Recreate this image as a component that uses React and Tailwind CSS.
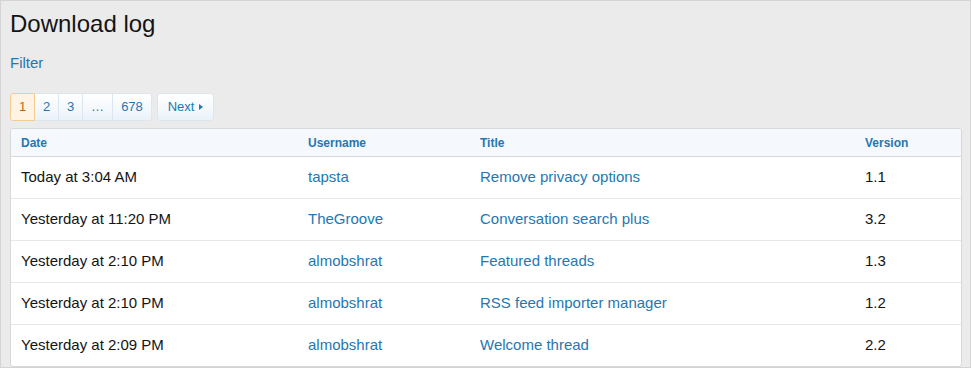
export default function App() {
  const rows = [
    ["Today at 3:04 AM", "tapsta", "Remove privacy options", "1.1"],
    ["Yesterday at 11:20 PM", "TheGroove", "Conversation search plus", "3.2"],
    ["Yesterday at 2:10 PM", "almobshrat", "Featured threads", "1.3"],
    ["Yesterday at 2:10 PM", "almobshrat", "RSS feed importer manager", "1.2"],
    ["Yesterday at 2:09 PM", "almobshrat", "Welcome thread", "2.2"],
  ];
  const pageBtn =
    "h-[28px] flex items-center justify-center border border-[#dce6ef] bg-gradient-to-b from-white to-[#eaf3fa] text-[#2577b1]";
  return (
    <div
      className="w-[971px] h-[368px] overflow-hidden bg-[#ebebeb] border border-[#d4d4d4] text-[#141414]"
      style={{ fontFamily: '"Liberation Sans", Arial, sans-serif' }}
    >
      <div className="pl-[9px] pr-[8px]">
        <h1 className="text-[24px] leading-[30px] pt-[8px] m-0 font-normal">Download log</h1>
        <div className="mt-[14px] text-[15px] leading-[20px] text-[#2577b1]">Filter</div>
        <div className="mt-[20px] flex text-[13px]">
          <div className="flex rounded-[3px] overflow-hidden">
            <span className="h-[28px] w-[25px] flex items-center justify-center border border-[#f4cc92] bg-[#fff4e3] text-[#b06d12] rounded-l-[3px]">1</span>
            <span className={pageBtn + " w-[24px] border-l-0"}>2</span>
            <span className={pageBtn + " w-[24px] border-l-0"}>3</span>
            <span className={pageBtn + " w-[30px] border-l-0"}>…</span>
            <span className={pageBtn + " w-[39px] border-l-0 rounded-r-[3px]"}>678</span>
          </div>
          <span className={pageBtn + " ml-[5px] w-[57px] rounded-[3px] gap-[5px]"}>
            Next
            <svg width="4" height="6" viewBox="0 0 4 6"><path d="M0 0 L4 3 L0 6 Z" fill="#2577b1" /></svg>
          </span>
        </div>
        <div className="mt-[7px] bg-white border border-[#d8d8d8] rounded-[3px] overflow-hidden">
          <div className="flex h-[28px] items-center bg-[#f5f9fd] border-b border-[#d8d8d8] text-[12px] font-bold text-[#2577b1]">
            <div className="w-[287px] pl-[10px]">Date</div>
            <div className="w-[172px] pl-[10px]">Username</div>
            <div className="w-[385px] pl-[10px]">Title</div>
            <div className="flex-1 pl-[10px]">Version</div>
          </div>
          {rows.map((r, i) => (
            <div
              key={i}
              className={
                "flex items-center text-[15px] " +
                (i < rows.length - 1 ? "h-[42px] border-b border-[#e7e7e7]" : "h-[41px]")
              }
            >
              <div className="w-[287px] pl-[10px]">{r[0]}</div>
              <div className="w-[172px] pl-[10px] text-[#2577b1]">{r[1]}</div>
              <div className="w-[385px] pl-[10px] text-[#2577b1]">{r[2]}</div>
              <div className="flex-1 pl-[10px]">{r[3]}</div>
            </div>
          ))}
        </div>
      </div>
    </div>
  );
}
